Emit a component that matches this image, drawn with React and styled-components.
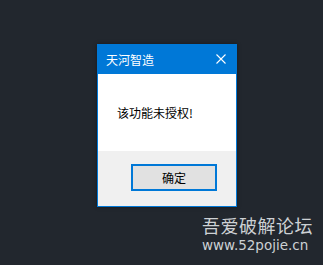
import React from 'react';
import styled, { createGlobalStyle } from 'styled-components';

const GlobalStyle = createGlobalStyle`
  html, body {
    margin: 0;
    padding: 0;
    background: #22272e;
  }
`;

const Page = styled.div`
  position: relative;
  width: 323px;
  height: 265px;
  background: #22272e;
  overflow: hidden;
  padding: 44px 0 0 97px;
  box-sizing: border-box;
  font-family: "Noto Sans CJK SC", "Noto Sans", sans-serif;
`;

const Dialog = styled.div`
  width: 140px;
  border: 1px solid #0078d7;
  box-sizing: border-box;
  display: flex;
  flex-direction: column;
  box-shadow: 0 0 4px rgba(0, 0, 0, 0.35);
`;

const TitleBar = styled.div`
  height: 30px;
  margin-top: -1px;
  background: #0078d7;
  display: flex;
  align-items: center;
  justify-content: space-between;
  padding: 0 10px 0 8px;
  color: #fff;
  font-size: 12px;
`;

const CloseButton = styled.svg`
  width: 10px;
  height: 10px;
  display: block;
`;

const Body = styled.div`
  height: 77px;
  background: #fff;
  display: flex;
  align-items: center;
  padding-left: 19px;
  font-size: 12px;
  color: #000;
`;

const Footer = styled.div`
  height: 55px;
  background: #f0f0f0;
  padding: 13px 0 0 33px;
  box-sizing: border-box;
`;

const Button = styled.button`
  width: 86px;
  height: 27px;
  background: #e1e1e1;
  border: 2px solid #0078d7;
  font-family: inherit;
  font-size: 12px;
  color: #000;
  padding: 0;
  display: flex;
  align-items: center;
  justify-content: center;
`;

const Watermark = styled.div`
  position: absolute;
  right: 10px;
  bottom: 10px;
  display: flex;
  flex-direction: column;
  align-items: flex-start;
  color: #cdd1d4;
`;

const MarkTitle = styled.div`
  font-size: 18px;
  line-height: 20px;
  letter-spacing: 0.5px;
`;

const MarkUrl = styled.div`
  font-family: "DejaVu Sans", sans-serif;
  font-size: 13.5px;
  line-height: 20px;
`;

export default function App() {
  return (
    <Page>
      <GlobalStyle />
      <Dialog>
        <TitleBar>
          <span>天河智造</span>
          <CloseButton viewBox="0 0 10 10">
            <path d="M0.5 0.5 L9.5 9.5 M9.5 0.5 L0.5 9.5" stroke="#fff" strokeWidth="1.1" fill="none" />
          </CloseButton>
        </TitleBar>
        <Body>该功能未授权!</Body>
        <Footer>
          <Button>确定</Button>
        </Footer>
      </Dialog>
      <Watermark>
        <MarkTitle>吾爱破解论坛</MarkTitle>
        <MarkUrl>www.52pojie.cn</MarkUrl>
      </Watermark>
    </Page>
  );
}
